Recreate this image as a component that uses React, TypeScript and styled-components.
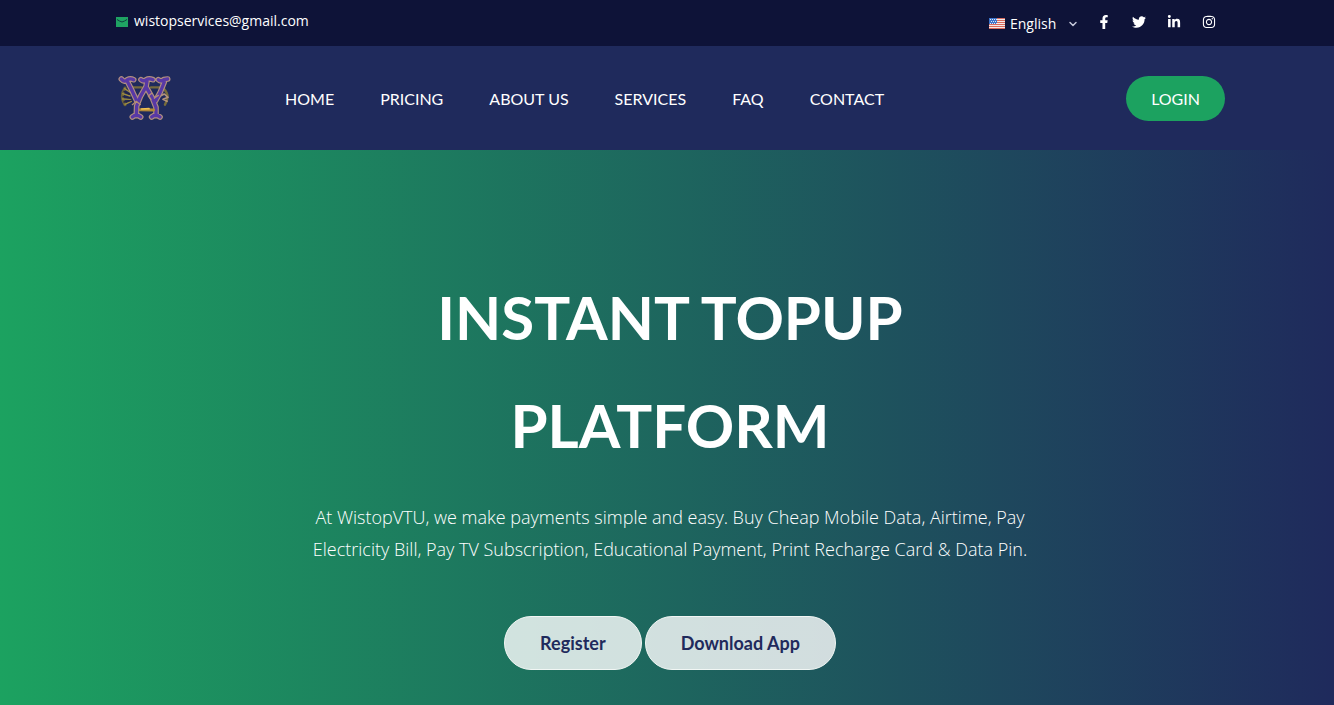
import React from 'react';
import styled, { createGlobalStyle } from 'styled-components';
import { FaFacebookF, FaInstagram, FaLinkedinIn, FaTwitter } from 'react-icons/fa';
import { ChevronDown } from 'lucide-react';

const GlobalStyle = createGlobalStyle`
  *, *::before, *::after { box-sizing: border-box; }
  html, body, #root { height: 100%; }
  body {
    margin: 0;
    background: #0e1338;
    color: #fff;
    font-family: 'Open Sans', 'Noto Sans', sans-serif;
  }
  a { color: inherit; text-decoration: none; }
`;

const Page = styled.div`
  display: flex;
  flex-direction: column;
  min-height: 100%;
`;

const Container = styled.div`
  display: flex;
  align-items: center;
  width: 100%;
  max-width: 1134px;
  margin: 0 auto;
  padding: 0 9px 0 15px;
`;

const TopBar = styled.div`
  display: flex;
  height: 46px;
  background: #0e1338;
`;

const TopContent = styled(Container)`
  justify-content: space-between;
`;

const Email = styled.a`
  display: flex;
  align-items: center;
  gap: 6px;
  padding: 0 0 4px 1px;
  font-size: 14px;
  line-height: 20px;

  svg { margin-top: 2px; }
`;

const TopRight = styled.div`
  display: flex;
  align-items: center;
  gap: 18px;
`;

const Language = styled.label`
  display: flex;
  align-items: center;
  gap: 5px;
  padding-top: 2px;
`;

const LanguageSelect = styled.select`
  appearance: none;
  width: 52px;
  height: 24px;
  padding: 0;
  border: 0;
  background: transparent;
  color: #fff;
  font: 14px/24px 'Open Sans', 'Noto Sans', sans-serif;
`;

const Socials = styled.nav`
  display: flex;
  gap: 21px;
  padding: 0 9px 2px 0;

  a { display: flex; }
`;

const NavBar = styled.header`
  display: flex;
  height: 104px;
  background: #1f2a5c;
  font-family: Lato, sans-serif;
`;

const LogoLink = styled.a`
  display: flex;
  margin: 0 114px 0 2px;
`;

const NavLinks = styled.nav`
  display: flex;
  flex: 1;
  gap: 46px;
  font-size: 16px;
  line-height: 24px;
  padding-top: 2px;
`;

const LoginButton = styled.button`
  height: 45px;
  padding: 2px 25px 0;
  border: 0;
  border-radius: 24px;
  background: #1ca260;
  color: #fff;
  font: 16px/24px Lato, sans-serif;
  cursor: pointer;
`;

const Hero = styled.main`
  flex: 1;
  padding: 113px 9px 35px 15px;
  background: linear-gradient(90deg, #1ca260 0%, #1f2a5c 100%);
  text-align: center;
`;

const Title = styled.h1`
  max-width: 720px;
  margin: 0 auto;
  font: 700 60px/108px Lato, sans-serif;
`;

const Lead = styled.p`
  max-width: 730px;
  margin: 22px auto 51px;
  font-size: 18px;
  font-weight: 300;
  line-height: 32px;
`;

const Actions = styled.div`
  display: flex;
  justify-content: center;
  gap: 3px;
`;

const ActionButton = styled.button`
  height: 54px;
  padding: 0 35px;
  border: 1px solid #f1f6f4;
  border-radius: 28px;
  background: rgba(255, 255, 255, 0.8);
  color: #1f2a5c;
  font: 700 18px/28px Lato, sans-serif;
  cursor: pointer;
`;

const FlagIcon = styled.svg`
  margin-bottom: 1px;
`;

const MailIcon = () => (
  <svg width="12" height="10" viewBox="0 0 12 10" aria-hidden="true">
    <path d="M0 0h12v10H0z" fill="#1fa363" />
    <path d="M1 2.5l2.5 1.5L6 5l2.5-1L11 2.5" fill="none" stroke="#0e3f40" />
  </svg>
);

const Flag = () => (
  <FlagIcon width="16" height="11" viewBox="0 0 16 11" aria-hidden="true">
    <path d="M0 0h16v11H0z" fill="#f4e9e7" />
    <path d="M0 .5h16M0 2.5h16M0 4.5h16M0 6.5h16M0 8.5h16M0 10.5h16" stroke="#d96a5c" />
    <path d="M0 0h8v6H0z" fill="#3c74c9" />
    <path d="M1 1.5h7M2 3.5h6M1 5.5h7" stroke="#dbe7fa" strokeDasharray="1 1" />
  </FlagIcon>
);

const wStrokes =
  'M47 41Q58 53 65 43Q74 38 84 43M66 50L80 78L94 108M106 43Q114 50 122 43Q130 38 142 43M124 48L121 64M121 64L104 94L93 122L92 151M121 64L140 98L151 126L151 151M158 43Q166 50 174 43L186 41M176 50L164 80L150 106M80 155Q92 145 105 155M138 155Q150 145 163 155';

const Logo = () => (
  <svg width="54" height="48" viewBox="34 26 162 144" role="img" aria-label="Wistop">
    <g fill="none" strokeLinecap="round" strokeLinejoin="round">
      <path d="M58 68Q42 92 58 118" stroke="#6d643a" strokeWidth="9" />
      <path d="M57 70L72 80M51 85L73 92M50 101L75 102M58 117L77 108" stroke="#a08d40" strokeWidth="4" />
      <path d="M55 78L72 87M52 94L74 98M55 110L76 105" stroke="#242447" strokeWidth="4" />
      <path d="M72 66L108 66M136 66L160 66" stroke="#75693d" strokeWidth="7" />
      <path d="M176 72Q194 91 178 118" stroke="#776c3b" strokeWidth="7" />
      <path d="M164 92L176 86L187 96L172 102L184 108" stroke="#b3937d" strokeWidth="5" />
      <path d={wStrokes} stroke="#b08e80" strokeWidth="17" />
      <path d={wStrokes} stroke="#5838a6" strokeWidth="10" />
      <path d="M80 118L92 108L104 118M138 84L128 92L136 102M146 98L158 90" stroke="#b58c75" strokeWidth="4" />
      <path d="M104 133L144 134" stroke="#b08838" strokeWidth="9" />
      <path d="M108 131L130 130" stroke="#f0c052" strokeWidth="5" />
    </g>
  </svg>
);

const navItems = ['HOME', 'PRICING', 'ABOUT US', 'SERVICES', 'FAQ', 'CONTACT'];

const socialItems = [
  { name: 'Facebook', Icon: FaFacebookF },
  { name: 'Twitter', Icon: FaTwitter },
  { name: 'LinkedIn', Icon: FaLinkedinIn },
  { name: 'Instagram', Icon: FaInstagram },
];

export default function App() {
  return (
    <Page>
      <GlobalStyle />
      <TopBar>
        <TopContent>
          <Email href="mailto:wistopservices@gmail.com">
            <MailIcon />
            wistopservices@gmail.com
          </Email>
          <TopRight>
            <Language>
              <Flag />
              <LanguageSelect aria-label="Language" defaultValue="en">
                <option value="en">English</option>
              </LanguageSelect>
              <ChevronDown size={12} strokeWidth={3} color="#c5c8da" aria-hidden="true" />
            </Language>
            <Socials aria-label="Social media">
              {socialItems.map(({ name, Icon }) => (
                <a key={name} href="#" aria-label={name}>
                  <Icon size={14} />
                </a>
              ))}
            </Socials>
          </TopRight>
        </TopContent>
      </TopBar>
      <NavBar>
        <Container>
          <LogoLink href="#">
            <Logo />
          </LogoLink>
          <NavLinks aria-label="Main">
            {navItems.map((item) => (
              <a key={item} href="#">{item}</a>
            ))}
          </NavLinks>
          <LoginButton type="button">LOGIN</LoginButton>
        </Container>
      </NavBar>
      <Hero>
        <Title>
          INSTANT TOPUP
          <br />
          PLATFORM
        </Title>
        <Lead>
          At WistopVTU, we make payments simple and easy. Buy Cheap Mobile Data, Airtime, Pay
          <br />
          Electricity Bill, Pay TV Subscription, Educational Payment, Print Recharge Card &amp; Data Pin.
        </Lead>
        <Actions>
          <ActionButton type="button">Register</ActionButton>
          <ActionButton type="button">Download App</ActionButton>
        </Actions>
      </Hero>
    </Page>
  );
}
